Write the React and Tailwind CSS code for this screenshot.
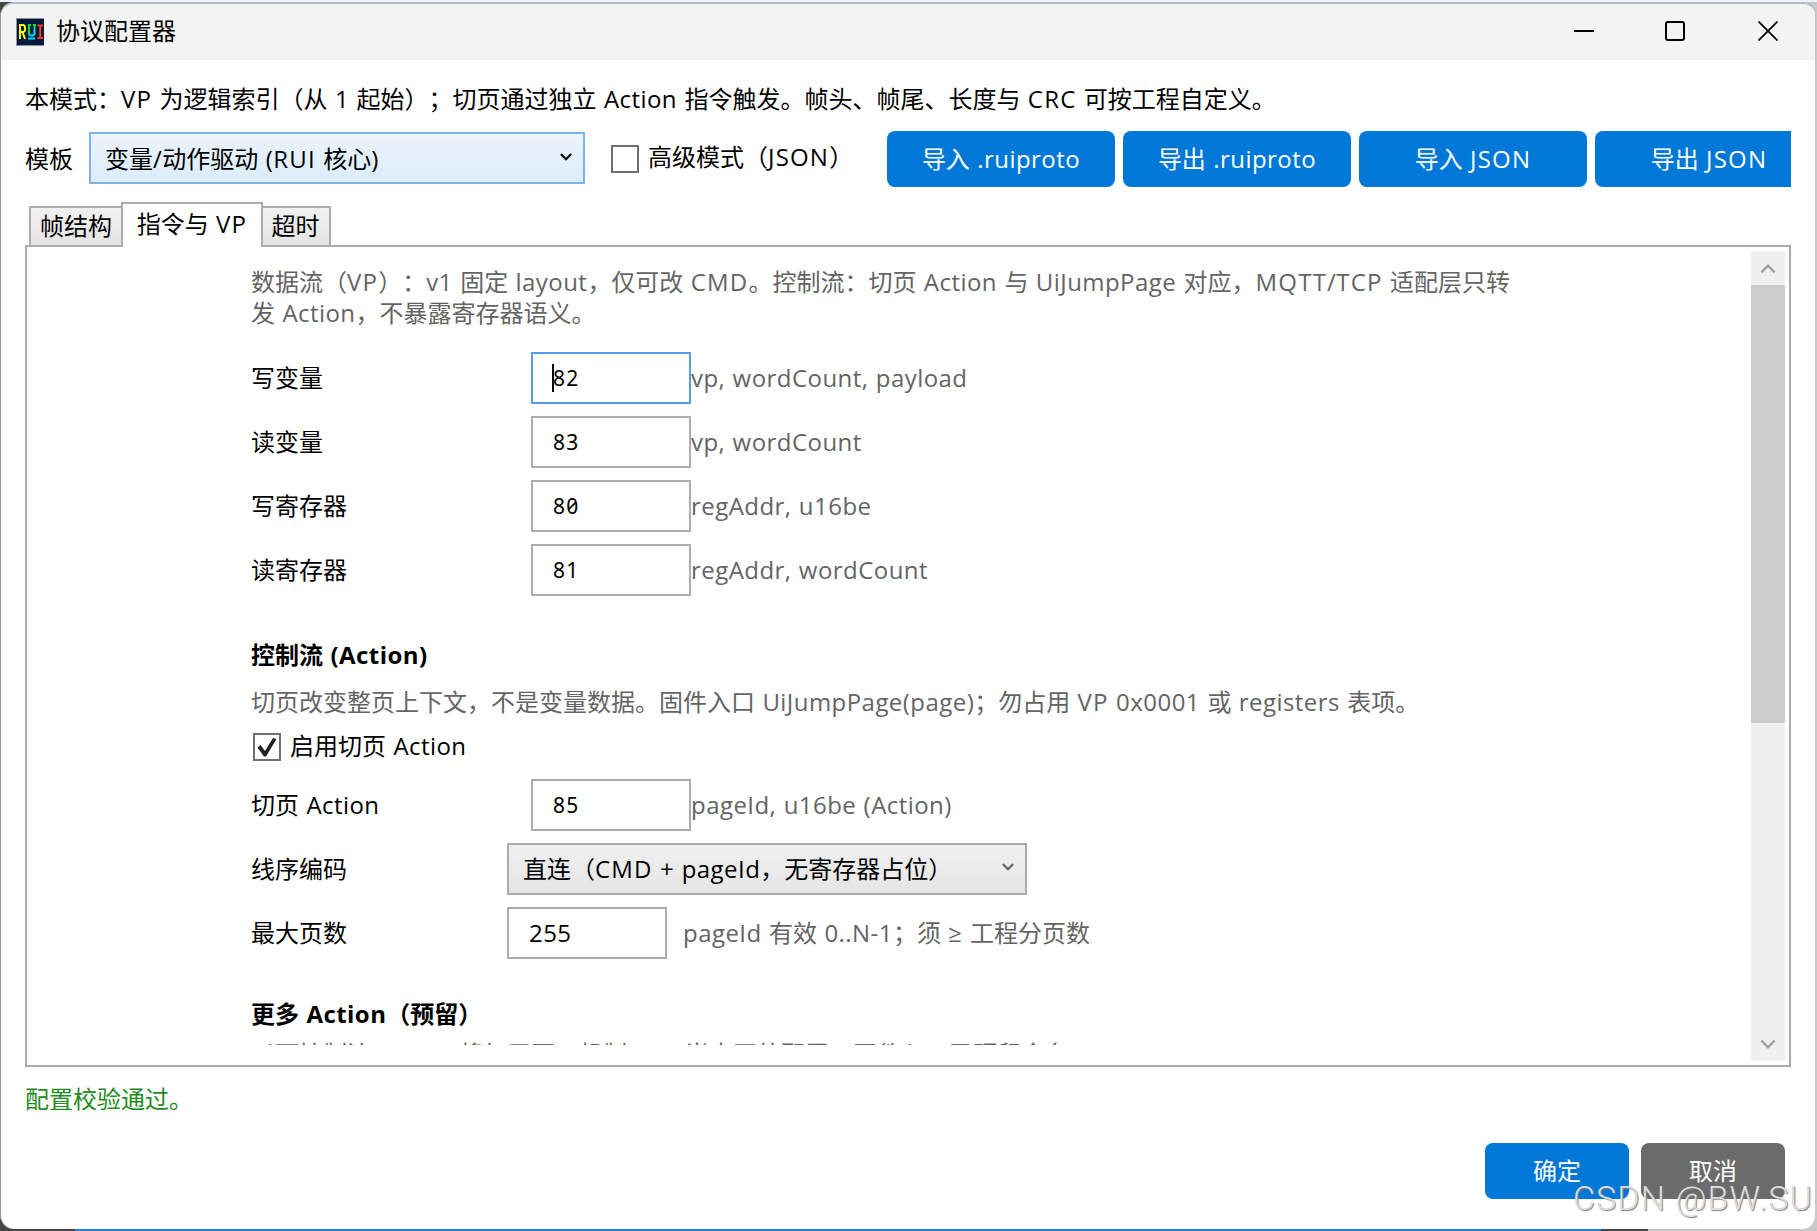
import React from "react";

const FONT = "font-['Open_Sans','Noto_Sans_CJK_SC',sans-serif]";

// Latin runs get a little extra tracking (all-caps words more), CJK keeps its full-width cells
function Mixed({ children }) {
  return children.split(/([\x20-\x7e≥]+)/).map((part, i) =>
    i % 2 ? (
      <span key={i} className="tracking-[0.450px] whitespace-pre [word-spacing:0.700px]">
        {part.split(/([A-Z]{2,}(?![a-z]))/).map((word, j) =>
          j % 2 ? (
            <span key={j} className="tracking-[1.200px]">
              {word}
            </span>
          ) : (
            word
          )
        )}
      </span>
    ) : (
      part
    )
  );
}

function Chevron({ className, flip }) {
  return (
    <svg viewBox="0 0 14 10" className={className} fill="none" stroke="currentColor">
      <path d={flip ? "M1 8.5 7 2.5 13 8.5" : "M1 1.5 7 7.5 13 1.5"} />
    </svg>
  );
}

function TitleBar() {
  return (
    <header className="flex h-14 items-center bg-[#f3f3f3] pb-[2px] pl-[15px]">
      <svg viewBox="0 0 28 28" className="mt-[2px] h-7 w-7">
        <rect width="28" height="28" fill="#8a8f98" />
        <rect x="1" y="1" width="27" height="26" fill="#041a3c" />
        <g fill="none" strokeWidth="2">
          <path stroke="#ffff00" d="M4 21V7h3.500l1.500 1.500v4L7.500 14H4M6.500 14 9 21" />
          <path stroke="#00e03c" d="M12 7h3M13 7v9M17 7h3M18.500 7v4" />
          <path stroke="#00d8ff" d="M18.500 11v5l-1.500 1.500h-3L13 16M12 20.500h7" />
          <path stroke="#ff3b14" d="M21.500 7.500h5.500M24.300 7v13M21.500 20h5.500" />
        </g>
      </svg>
      <h1 className="ml-3 text-2xl leading-none">协议配置器</h1>
      <div className="ml-auto flex items-center pr-[37px] text-black">
        <svg viewBox="0 0 20 20" className="mr-[71px] h-5 w-5">
          <path d="M0 10h20" stroke="currentColor" strokeWidth="2" />
        </svg>
        <svg viewBox="0 0 20 20" className="mr-[73px] h-5 w-5">
          <rect x="1" y="1" width="18" height="18" rx="2" fill="none" stroke="currentColor" strokeWidth="2" />
        </svg>
        <svg viewBox="0 0 20 20" className="h-5 w-5">
          <path d="M.5.5l19 19M19.500.5l-19 19" stroke="currentColor" strokeWidth="1.800" />
        </svg>
      </div>
    </header>
  );
}

function Checkbox({ checked }) {
  return (
    <span className="flex h-7 w-7 shrink-0 items-center justify-center border-2 border-[#707070] bg-white">
      {checked && (
        <svg viewBox="0 0 22 22" className="h-[22px] w-[22px]">
          <path d="M1.500 11.500 8 20.500 10 20.500 20.500 3 17 2 9 15 4.500 9z" fill="#212121" />
        </svg>
      )}
    </span>
  );
}

function ToolButton({ children }) {
  return (
    <button className="h-14 w-[228px] shrink-0 rounded-lg bg-[#0078d7] text-2xl leading-none text-white">
      <Mixed>{children}</Mixed>
    </button>
  );
}

function CommandRow({ label, value, hint, focused }) {
  return (
    <div className="mb-3 flex h-[52px] items-center">
      <span className="w-[280px]">
        <Mixed>{label}</Mixed>
      </span>
      <div
        className={`flex h-[52px] w-40 items-center border-2 bg-white pl-[19px] ${
          focused ? "border-[#569de5]" : "border-[#abadb3]"
        }`}
      >
        <span className={`h-7 w-[2px] ${focused ? "bg-black" : ""}`} />
        <span className="-ml-[1px] font-['Noto_Sans',sans-serif] text-[21px] tracking-[1.200px] slashed-zero">
          {value}
        </span>
      </div>
      <span className="text-[#646464]">
        <Mixed>{hint}</Mixed>
      </span>
    </div>
  );
}

const COMMANDS = [
  { label: "写变量", value: "82", hint: "vp, wordCount, payload", focused: true },
  { label: "读变量", value: "83", hint: "vp, wordCount" },
  { label: "写寄存器", value: "80", hint: "regAddr, u16be" },
  { label: "读寄存器", value: "81", hint: "regAddr, wordCount" },
];

function CommandPanel() {
  return (
    <div className="h-[798px] flex-1 overflow-hidden pl-[224px] text-2xl leading-8">
      <p className="mt-[19px] whitespace-nowrap leading-[31px] text-[#646464]">
        <Mixed>数据流（VP）：v1 固定 layout，仅可改 CMD。控制流：切页 Action 与 UiJumpPage 对应，MQTT/TCP 适配层只转</Mixed>
        <br />
        <Mixed>发 Action，不暴露寄存器语义。</Mixed>
      </p>
      <div className="mt-6">
        {COMMANDS.map((c) => (
          <CommandRow key={c.label} {...c} />
        ))}
      </div>
      <h2 className="mt-[43px] font-bold">
        <Mixed>控制流 (Action)</Mixed>
      </h2>
      <p className="mt-[15px] whitespace-nowrap text-[#646464]">
        <Mixed>切页改变整页上下文，不是变量数据。固件入口 UiJumpPage(page)；勿占用 VP 0x0001 或 registers 表项。</Mixed>
      </p>
      <label className="mt-[13px] flex h-8 items-center gap-[9px] pl-[2px]">
        <Checkbox checked />
        <span className="-mt-[2px]">
          <Mixed>启用切页 Action</Mixed>
        </span>
      </label>
      <div className="mt-4">
        <CommandRow label="切页 Action" value="85" hint="pageId, u16be (Action)" />
      </div>
      <div className="mb-3 flex h-[52px] items-center">
        <span className="w-64">线序编码</span>
        <div className="flex h-[52px] w-[520px] items-center justify-between border-2 border-[#acacac] bg-linear-to-b from-[#f0f0f0] to-[#e5e5e5] pr-[11px] pl-[14px]">
          <span>
            <Mixed>直连（CMD + pageId，无寄存器占位）</Mixed>
          </span>
          <Chevron className="mb-1 h-[10px] w-3 stroke-[2.5] text-[#606060]" />
        </div>
      </div>
      <div className="flex h-[52px] items-center">
        <span className="w-64">最大页数</span>
        <div className="mr-4 flex h-[52px] w-40 items-center border-2 border-[#abadb3] bg-white pl-5">
          <Mixed>255</Mixed>
        </div>
        <span className="text-[#646464]">
          <Mixed>pageId 有效 0..N-1；须 ≥ 工程分页数</Mixed>
        </span>
      </div>
      <h2 className="mt-[39px] font-bold">
        <Mixed>更多 Action（预留）</Mixed>
      </h2>
      <p className="mt-2 whitespace-nowrap text-[#646464]">
        <Mixed>以下控制流 Action 将复用同一机制，v1 尚未开放配置，固件入口已预留命名。</Mixed>
      </p>
    </div>
  );
}

function ScrollBar() {
  return (
    <div className="mt-1 mr-1 flex h-[810px] w-[34px] flex-col items-center bg-[#f0f0f0]">
      <div className="flex h-[34px] items-center">
        <Chevron flip className="h-[11px] w-4 stroke-[2.200] text-[#a0a0a0]" />
      </div>
      <div className="h-[438px] w-full bg-[#cdcdcd]" />
      <div className="mt-auto flex h-[34px] items-center">
        <Chevron className="h-[11px] w-4 stroke-[2.200] text-[#a0a0a0]" />
      </div>
    </div>
  );
}

export default function App() {
  return (
    <div
      className={`relative h-[1231px] w-[1817px] overflow-hidden bg-[#e9f1fb] pt-[2px] text-black [text-spacing-trim:space-all] ${FONT}`}
    >
      <div className="flex h-[1229px] flex-col bg-linear-to-r from-[#454545] from-4% via-[#2b7cd0] via-4% to-[#c8c8c8]">
        <div className="flex h-[1227px] flex-col overflow-hidden rounded-[14px] border-t-2 border-r-2 border-l border-t-[#b9bdc3] border-r-[#c8c8c8] border-l-[#9a9a9a] bg-white">
          <TitleBar />
          <main className="flex flex-1 flex-col pr-[24px] pl-6">
            <p className="mt-[23px] text-2xl leading-8 whitespace-nowrap">
              <Mixed>本模式：VP 为逻辑索引（从 1 起始）；切页通过独立 Action 指令触发。帧头、帧尾、长度与 CRC 可按工程自定义。</Mixed>
            </p>
            <div className="mt-4 flex h-14 items-center overflow-hidden text-2xl leading-8">
              <span className="w-16 shrink-0">模板</span>
              <div className="-mt-[2px] flex h-[52px] w-[496px] shrink-0 items-center justify-between border-2 border-[#7eb4ea] bg-linear-to-b from-[#ecf4fc] to-[#dcecfc] pr-[11px] pl-[14px]">
                <span className="mt-[2px]">
                  <Mixed>变量/动作驱动 (RUI 核心)</Mixed>
                </span>
                <Chevron className="mb-[2px] h-[10px] w-3 stroke-[2.5] text-black" />
              </div>
              <label className="mr-[10px] ml-[26px] flex w-[266px] shrink-0 items-center gap-[9px]">
                <Checkbox />
                <span className="-mt-1">
                  <Mixed>高级模式（JSON）</Mixed>
                </span>
              </label>
              <div className="flex min-w-0 flex-1 gap-2">
                <ToolButton>导入 .ruiproto</ToolButton>
                <ToolButton>导出 .ruiproto</ToolButton>
                <ToolButton>导入 JSON</ToolButton>
                <ToolButton>导出 JSON</ToolButton>
              </div>
            </div>
            <div className="z-10 mt-[15px] -mb-[2px] flex h-[45px] items-end pl-1 text-2xl leading-8">
              <div className="mb-[2px] flex h-[39px] w-[94px] items-center justify-center border-2 border-b-0 border-[#acacac] bg-linear-to-b from-[#f0f0f0] to-[#e5e5e5] pb-[1px]">
                帧结构
              </div>
              <div className="-mx-[2px] flex h-[45px] w-[142px] items-center justify-center border-2 border-b-0 border-[#acacac] bg-white pb-[3px]">
                <span>
                  <Mixed>指令与 VP</Mixed>
                </span>
              </div>
              <div className="mb-[2px] flex h-[39px] w-[70px] items-center justify-center border-2 border-b-0 border-[#acacac] bg-linear-to-b from-[#f0f0f0] to-[#e5e5e5] pr-[1px] pb-[1px]">
                超时
              </div>
            </div>
            <section className="flex h-[822px] items-start border-2 border-[#acacac] bg-white">
              <CommandPanel />
              <ScrollBar />
            </section>
            <p className="mt-4 text-2xl leading-8 text-[#228b22]">配置校验通过。</p>
            <div className="mt-[28px] flex justify-end gap-3 pr-[6px] text-2xl leading-none text-white">
              <button className="h-14 w-36 rounded-lg bg-[#0078d7]">确定</button>
              <button className="h-14 w-36 rounded-lg bg-[#6b6b6b]">取消</button>
            </div>
          </main>
        </div>
        <div className="flex h-[2px]">
          <div className="w-[75px] bg-[#454545]" />
          <div className="w-[1526px] bg-[#2b7cd0]" />
          <div className="w-[47px] bg-[#454545]" />
          <div className="flex-1 bg-[#c8c8c8]" />
        </div>
      </div>
      <span className="absolute right-1 bottom-[14px] font-['Roboto',sans-serif] text-[34px] leading-[38px] font-light tracking-[1.100px] whitespace-nowrap text-[#dcdcdc] [text-shadow:1px_1px_1px_#808080]">
        CSDN @BW.SU
      </span>
    </div>
  );
}
